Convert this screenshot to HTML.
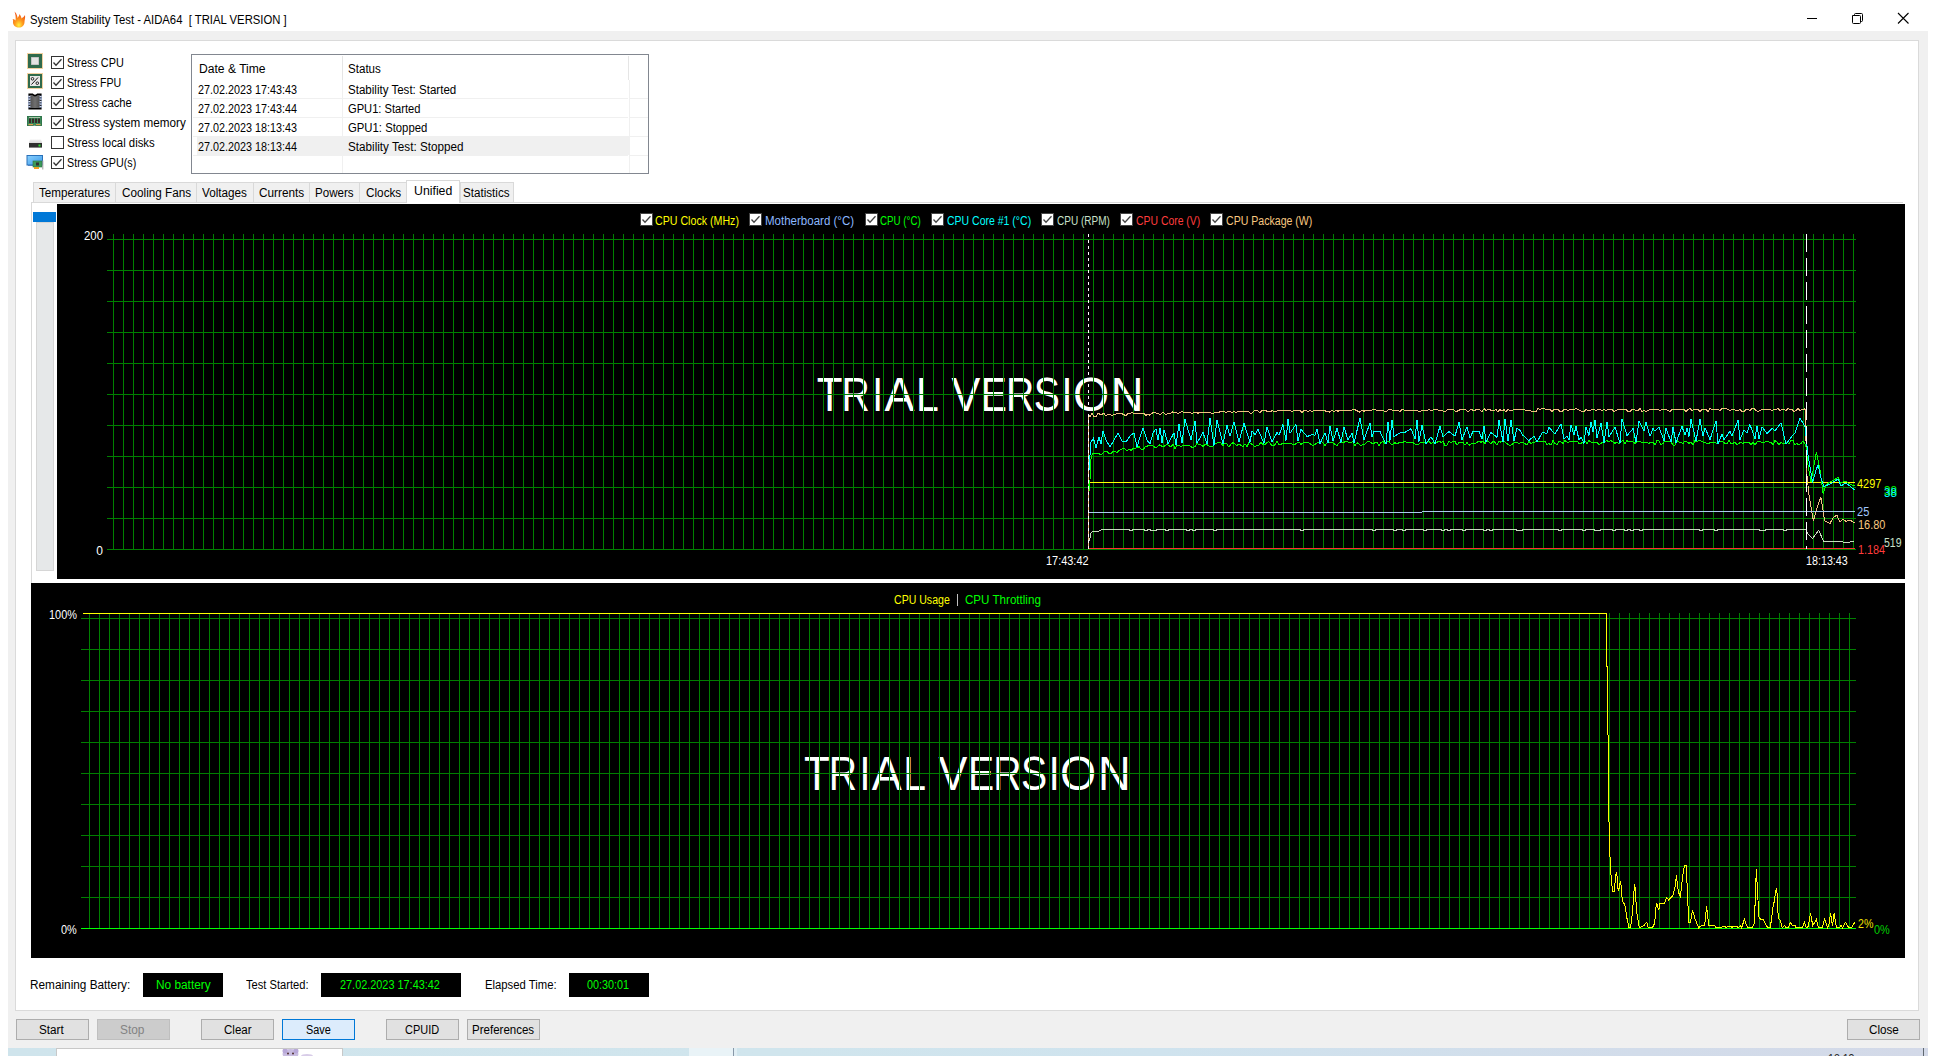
<!DOCTYPE html>
<html><head><meta charset="utf-8"><title>System Stability Test - AIDA64</title>
<style>
html,body{margin:0;padding:0;}
body{width:1936px;height:1056px;position:relative;overflow:hidden;background:#fff;font-family:"Liberation Sans", sans-serif;}
.r{position:absolute;box-sizing:content-box;}
.t{position:absolute;white-space:pre;line-height:1;font-family:"Liberation Sans", sans-serif;}
</style></head><body>
<div class="r" style="left:8px;top:31px;width:1920px;height:1017px;background:#f0f0f0;"></div>
<div class="r" style="left:15px;top:40px;width:1904px;height:971px;background:#fff;box-shadow:inset 0 0 0 1px #dadada;"></div>
<svg class="r" style="left:11px;top:11px" width="15" height="17" viewBox="0 0 15 17">
<defs><radialGradient id="fl" cx="0.5" cy="0.85" r="0.75"><stop offset="0" stop-color="#fff040"/><stop offset="0.4" stop-color="#ffa020"/><stop offset="1" stop-color="#f05010"/></radialGradient></defs>
<path d="M3.5 0.5 C6 3 6.5 5.5 6.5 7 C7.5 5.5 8.5 4.5 8.5 3 C10 5 10.5 6.5 10.5 7.5 C11.5 6.5 13 6 14 4 C14.5 7 13.5 9 13.5 11 C13.5 14.5 11 16.5 8 16.5 C5 16.5 2 14.5 2 11.5 C2 10 2.5 9 1.5 8 C3 8 4 9 4.5 9.5 C5 6.5 4.5 3 3.5 0.5 Z" fill="url(#fl)"/></svg>
<div class="t" style="left:30.28px;top:13.84px;font-size:12px;color:#000;transform:scaleX(0.9419);transform-origin:0 0;">System Stability Test - AIDA64&nbsp; [ TRIAL VERSION ]</div>
<div class="r" style="left:1807px;top:18px;width:10px;height:1px;background:#000;"></div>
<svg class="r" style="left:1852px;top:13px" width="11" height="11" viewBox="0 0 11 11"><path d="M0.5 2.5 H7.5 Q8.5 2.5 8.5 3.5 V9.5 Q8.5 10.5 7.5 10.5 H1.5 Q0.5 10.5 0.5 9.5 Z M2.5 2.5 V1.5 Q2.5 0.5 3.5 0.5 H9.5 Q10.5 0.5 10.5 1.5 V7.5 Q10.5 8.5 9.5 8.5 H8.5" fill="none" stroke="#000" stroke-width="1"/></svg>
<svg class="r" style="left:1897px;top:12px" width="12" height="12" viewBox="0 0 12 12"><path d="M1 1 L11.5 11.5 M11.5 1 L1 11.5" stroke="#000" stroke-width="1.1"/></svg>
<svg class="r" style="left:27px;top:53px" width="16" height="16" viewBox="0 0 16 16"><rect x="0.5" y="0.5" width="15" height="15" fill="none" stroke="#e0a040" stroke-width="1" stroke-dasharray="1 1"/><rect x="1" y="1" width="14" height="14" fill="#2f6a4c"/><rect x="4" y="4" width="8" height="8" fill="#e4e4e4"/><rect x="4.3" y="4.3" width="7.4" height="7.4" fill="none" stroke="#b0b0b0" stroke-width="0.6"/></svg>
<svg class="r" style="left:27px;top:73px" width="16" height="16" viewBox="0 0 16 16"><rect x="0.5" y="0.5" width="15" height="15" fill="none" stroke="#e0a040" stroke-width="1" stroke-dasharray="1 1"/><rect x="1" y="1" width="14" height="14" fill="#2f6a4c"/><rect x="3" y="3" width="10" height="10" fill="#e8e8e8"/><path d="M4.5 11.5 L11 4.5" stroke="#111" stroke-width="1"/><circle cx="5.5" cy="5.8" r="1.3" fill="none" stroke="#111" stroke-width="0.9"/><circle cx="10.3" cy="10.2" r="1.3" fill="none" stroke="#111" stroke-width="0.9"/></svg>
<svg class="r" style="left:28px;top:93px" width="14" height="17" viewBox="0 0 14 17"><defs><linearGradient id="chg" x1="0" y1="0" x2="1" y2="0"><stop offset="0" stop-color="#4a4a4a"/><stop offset="0.5" stop-color="#707070"/><stop offset="1" stop-color="#4a4a4a"/></linearGradient></defs><path d="M1.2 1.2 H4.5 Q7 4 9.5 1.2 H12.8 V15.8 H1.2 Z" fill="url(#chg)" stroke="#000" stroke-width="1.6"/><g fill="#fff" stroke="#8aa0d0" stroke-width="0.5"><rect x="0.2" y="3" width="2" height="1.2"/><rect x="0.2" y="5.5" width="2" height="1.2"/><rect x="0.2" y="8" width="2" height="1.2"/><rect x="0.2" y="10.5" width="2" height="1.2"/><rect x="0.2" y="13" width="2" height="1.2"/><rect x="11.8" y="3" width="2" height="1.2"/><rect x="11.8" y="5.5" width="2" height="1.2"/><rect x="11.8" y="8" width="2" height="1.2"/><rect x="11.8" y="10.5" width="2" height="1.2"/><rect x="11.8" y="13" width="2" height="1.2"/></g></svg>
<svg class="r" style="left:27px;top:116px" width="15" height="10" viewBox="0 0 15 10"><path d="M0 0 H15 V10 H8.5 V9 H6.5 V10 H0 Z" fill="#3c8a5a"/><rect x="0.5" y="0.5" width="14" height="9" fill="none" stroke="#2a6a44" stroke-width="0.6"/><rect x="2" y="2.5" width="2" height="4.5" fill="#3a2a2a"/><rect x="5" y="2.5" width="2" height="4.5" fill="#3a2a2a"/><rect x="8" y="2.5" width="2" height="4.5" fill="#3a2a2a"/><rect x="11" y="2.5" width="2" height="4.5" fill="#3a2a2a"/><rect x="2" y="1" width="11" height="1" fill="#a8c8a8"/><rect x="1.5" y="8" width="4.5" height="1.2" fill="#e0a050"/><rect x="9" y="8" width="4.5" height="1.2" fill="#e0a050"/></svg>
<svg class="r" style="left:28px;top:139px" width="15" height="9" viewBox="0 0 15 9"><defs><linearGradient id="dkg" x1="0" y1="0" x2="0" y2="1"><stop offset="0" stop-color="#f0f0f0"/><stop offset="1" stop-color="#b8b8b8"/></linearGradient></defs><path d="M2 0.5 H13 L14 3.5 V8.5 H1 V3.5 Z" fill="url(#dkg)"/><rect x="1" y="4" width="13" height="4.5" fill="#2e2e2e"/><rect x="10.5" y="5.5" width="2" height="2" fill="#30e030"/></svg>
<svg class="r" style="left:26px;top:155px" width="18" height="15" viewBox="0 0 18 15"><defs><linearGradient id="mng" x1="0" y1="0" x2="1" y2="1"><stop offset="0" stop-color="#8ad0ff"/><stop offset="1" stop-color="#3a9ae8"/></linearGradient></defs><rect x="1" y="0.5" width="15.5" height="9.5" fill="url(#mng)" stroke="#2a70b8" stroke-width="1"/><rect x="2" y="10" width="6" height="1" fill="#5080c0"/><rect x="7" y="6" width="9" height="6" fill="#3c9a5a" stroke="#2a7040" stroke-width="0.6"/><rect x="10" y="7.5" width="3" height="3" fill="#333"/><rect x="8" y="12" width="5" height="2" fill="#f0a020"/><rect x="16.3" y="5.5" width="1" height="9" fill="#a0a0a0"/></svg>
<div class="r" style="left:51px;top:56px;width:11px;height:11px;border:1px solid #333;background:#fff"></div>
<svg class="r" style="left:52px;top:57px" width="11" height="11" viewBox="0 0 11 11"><path d="M1.5 5.5 L4 8.2 L9.5 2.2" fill="none" stroke="#333" stroke-width="1.3"/></svg>
<div class="t" style="left:66.68px;top:56.84px;font-size:12px;color:#000;transform:scaleX(0.9057);transform-origin:0 0;">Stress CPU</div>
<div class="r" style="left:51px;top:76px;width:11px;height:11px;border:1px solid #333;background:#fff"></div>
<svg class="r" style="left:52px;top:77px" width="11" height="11" viewBox="0 0 11 11"><path d="M1.5 5.5 L4 8.2 L9.5 2.2" fill="none" stroke="#333" stroke-width="1.3"/></svg>
<div class="t" style="left:66.68px;top:76.84px;font-size:12px;color:#000;transform:scaleX(0.8844);transform-origin:0 0;">Stress FPU</div>
<div class="r" style="left:51px;top:96px;width:11px;height:11px;border:1px solid #333;background:#fff"></div>
<svg class="r" style="left:52px;top:97px" width="11" height="11" viewBox="0 0 11 11"><path d="M1.5 5.5 L4 8.2 L9.5 2.2" fill="none" stroke="#333" stroke-width="1.3"/></svg>
<div class="t" style="left:66.68px;top:96.84px;font-size:12px;color:#000;transform:scaleX(0.9327);transform-origin:0 0;">Stress cache</div>
<div class="r" style="left:51px;top:116px;width:11px;height:11px;border:1px solid #333;background:#fff"></div>
<svg class="r" style="left:52px;top:117px" width="11" height="11" viewBox="0 0 11 11"><path d="M1.5 5.5 L4 8.2 L9.5 2.2" fill="none" stroke="#333" stroke-width="1.3"/></svg>
<div class="t" style="left:66.68px;top:116.84px;font-size:12px;color:#000;transform:scaleX(0.9732);transform-origin:0 0;">Stress system memory</div>
<div class="r" style="left:51px;top:136px;width:11px;height:11px;border:1px solid #333;background:#fff"></div>
<div class="t" style="left:66.68px;top:136.84px;font-size:12px;color:#000;transform:scaleX(0.9463);transform-origin:0 0;">Stress local disks</div>
<div class="r" style="left:51px;top:156px;width:11px;height:11px;border:1px solid #333;background:#fff"></div>
<svg class="r" style="left:52px;top:157px" width="11" height="11" viewBox="0 0 11 11"><path d="M1.5 5.5 L4 8.2 L9.5 2.2" fill="none" stroke="#333" stroke-width="1.3"/></svg>
<div class="t" style="left:66.68px;top:156.84px;font-size:12px;color:#000;transform:scaleX(0.8956);transform-origin:0 0;">Stress GPU(s)</div>
<div class="r" style="left:191px;top:54px;width:458px;height:120px;background:#fff;box-shadow:inset 0 0 0 1px #828790;"></div>
<div class="r" style="left:342px;top:56px;width:1px;height:24px;background:#e5e5e5;"></div>
<div class="r" style="left:628px;top:56px;width:1px;height:24px;background:#e5e5e5;"></div>
<div class="t" style="left:198.78px;top:62.84px;font-size:12px;color:#000;transform:scaleX(1.0084);transform-origin:0 0;">Date &amp; Time</div>
<div class="t" style="left:348.28px;top:62.84px;font-size:12px;color:#000;transform:scaleX(0.9651);transform-origin:0 0;">Status</div>
<div class="r" style="left:197px;top:136px;width:432px;height:19px;background:#f0f0f0;"></div>
<div class="r" style="left:193px;top:98px;width:435px;height:1px;background:#f0f0f0;"></div>
<div class="r" style="left:630px;top:98px;width:18px;height:1px;background:#f0f0f0;"></div>
<div class="r" style="left:193px;top:117px;width:435px;height:1px;background:#f0f0f0;"></div>
<div class="r" style="left:630px;top:117px;width:18px;height:1px;background:#f0f0f0;"></div>
<div class="r" style="left:193px;top:136px;width:435px;height:1px;background:#f0f0f0;"></div>
<div class="r" style="left:630px;top:136px;width:18px;height:1px;background:#f0f0f0;"></div>
<div class="r" style="left:193px;top:155px;width:435px;height:1px;background:#f0f0f0;"></div>
<div class="r" style="left:630px;top:155px;width:18px;height:1px;background:#f0f0f0;"></div>
<div class="r" style="left:342px;top:80px;width:1px;height:93px;background:#f0f0f0;"></div>
<div class="r" style="left:629px;top:80px;width:1px;height:93px;background:#f0f0f0;"></div>
<div class="t" style="left:198.28px;top:83.84px;font-size:12px;color:#000;transform:scaleX(0.8988);transform-origin:0 0;">27.02.2023 17:43:43</div>
<div class="t" style="left:348.28px;top:83.84px;font-size:12px;color:#000;transform:scaleX(0.9621);transform-origin:0 0;">Stability Test: Started</div>
<div class="t" style="left:198.28px;top:102.84px;font-size:12px;color:#000;transform:scaleX(0.8988);transform-origin:0 0;">27.02.2023 17:43:44</div>
<div class="t" style="left:348.28px;top:102.84px;font-size:12px;color:#000;transform:scaleX(0.9290);transform-origin:0 0;">GPU1: Started</div>
<div class="t" style="left:198.28px;top:121.84px;font-size:12px;color:#000;transform:scaleX(0.8988);transform-origin:0 0;">27.02.2023 18:13:43</div>
<div class="t" style="left:348.28px;top:121.84px;font-size:12px;color:#000;transform:scaleX(0.9436);transform-origin:0 0;">GPU1: Stopped</div>
<div class="t" style="left:198.28px;top:140.84px;font-size:12px;color:#000;transform:scaleX(0.8988);transform-origin:0 0;">27.02.2023 18:13:44</div>
<div class="t" style="left:348.28px;top:140.84px;font-size:12px;color:#000;transform:scaleX(0.9740);transform-origin:0 0;">Stability Test: Stopped</div>
<div class="r" style="left:33px;top:182px;width:83px;height:21px;background:#f0f0f0;box-shadow:inset 0 0 0 1px #d9d9d9;"></div>
<div class="t" style="left:38.88px;top:186.84px;font-size:12px;color:#000;transform:scaleX(0.9683);transform-origin:0 0;">Temperatures</div>
<div class="r" style="left:115px;top:182px;width:82px;height:21px;background:#f0f0f0;box-shadow:inset 0 0 0 1px #d9d9d9;"></div>
<div class="t" style="left:121.78px;top:186.84px;font-size:12px;color:#000;transform:scaleX(0.9779);transform-origin:0 0;">Cooling Fans</div>
<div class="r" style="left:196px;top:182px;width:58px;height:21px;background:#f0f0f0;box-shadow:inset 0 0 0 1px #d9d9d9;"></div>
<div class="t" style="left:202.28px;top:186.84px;font-size:12px;color:#000;transform:scaleX(0.9763);transform-origin:0 0;">Voltages</div>
<div class="r" style="left:253px;top:182px;width:57px;height:21px;background:#f0f0f0;box-shadow:inset 0 0 0 1px #d9d9d9;"></div>
<div class="t" style="left:258.78px;top:186.84px;font-size:12px;color:#000;transform:scaleX(0.9814);transform-origin:0 0;">Currents</div>
<div class="r" style="left:309px;top:182px;width:51px;height:21px;background:#f0f0f0;box-shadow:inset 0 0 0 1px #d9d9d9;"></div>
<div class="t" style="left:315.48px;top:186.84px;font-size:12px;color:#000;transform:scaleX(0.9631);transform-origin:0 0;">Powers</div>
<div class="r" style="left:359px;top:182px;width:48px;height:21px;background:#f0f0f0;box-shadow:inset 0 0 0 1px #d9d9d9;"></div>
<div class="t" style="left:365.88px;top:186.84px;font-size:12px;color:#000;transform:scaleX(0.9789);transform-origin:0 0;">Clocks</div>
<div class="r" style="left:406px;top:180px;width:54px;height:24px;background:#fff;box-shadow:inset 1px 1px 0 0 #d9d9d9, inset -1px 0 0 0 #d9d9d9;"></div>
<div class="t" style="left:413.58px;top:184.84px;font-size:12px;color:#000;transform:scaleX(1.0254);transform-origin:0 0;">Unified</div>
<div class="r" style="left:460px;top:182px;width:54px;height:21px;background:#f0f0f0;box-shadow:inset 0 0 0 1px #d9d9d9;"></div>
<div class="t" style="left:463.48px;top:186.84px;font-size:12px;color:#000;transform:scaleX(0.9694);transform-origin:0 0;">Statistics</div>
<div class="r" style="left:31px;top:202px;width:375px;height:1px;background:#d9d9d9;"></div>
<div class="r" style="left:460px;top:202px;width:1443px;height:1px;background:#d9d9d9;"></div>
<div class="r" style="left:31px;top:202px;width:1px;height:381px;background:#d9d9d9;"></div>
<div class="r" style="left:406px;top:203px;width:54px;height:1px;background:#fff;"></div>
<div class="r" style="left:33px;top:212px;width:23px;height:10px;background:#0078d7;"></div>
<div class="r" style="left:36px;top:222px;width:18px;height:349px;background:#e6e8e9;box-shadow:inset 0 0 0 1px #d6d6d6;"></div>
<div class="r" style="left:57px;top:204px;width:1848px;height:375px;background:#000;"></div>
<div class="r" style="left:31px;top:583px;width:1874px;height:375px;background:#000;"></div>
<svg class="r" style="left:0;top:0" width="1936" height="1056" viewBox="0 0 1936 1056"><text transform="translate(816.84,410.6) scale(0.861,1)" x="0" y="0" font-family="Liberation Sans" font-size="49" fill="#fff">T</text><text transform="translate(841.55,410.6) scale(0.800,1)" x="0" y="0" font-family="Liberation Sans" font-size="49" fill="#fff">R</text><text transform="translate(872.20,410.6) scale(0.800,1)" x="0" y="0" font-family="Liberation Sans" font-size="49" fill="#fff">I</text><text transform="translate(884.60,410.6) scale(0.918,1)" x="0" y="0" font-family="Liberation Sans" font-size="49" fill="#fff">A</text><text transform="translate(915.95,410.6) scale(0.836,1)" x="0" y="0" font-family="Liberation Sans" font-size="49" fill="#fff">L</text><text transform="translate(951.40,410.6) scale(0.882,1)" x="0" y="0" font-family="Liberation Sans" font-size="49" fill="#fff">V</text><text transform="translate(980.75,410.6) scale(0.800,1)" x="0" y="0" font-family="Liberation Sans" font-size="49" fill="#fff">E</text><text transform="translate(1006.05,410.6) scale(0.800,1)" x="0" y="0" font-family="Liberation Sans" font-size="49" fill="#fff">R</text><text transform="translate(1033.75,410.6) scale(0.800,1)" x="0" y="0" font-family="Liberation Sans" font-size="49" fill="#fff">S</text><text transform="translate(1061.45,410.6) scale(0.800,1)" x="0" y="0" font-family="Liberation Sans" font-size="49" fill="#fff">I</text><text transform="translate(1072.90,410.6) scale(0.950,1)" x="0" y="0" font-family="Liberation Sans" font-size="49" fill="#fff">O</text><text transform="translate(1110.80,410.6) scale(0.925,1)" x="0" y="0" font-family="Liberation Sans" font-size="49" fill="#fff">N</text><text transform="translate(804.04,789.8) scale(0.861,1)" x="0" y="0" font-family="Liberation Sans" font-size="49" fill="#fff">T</text><text transform="translate(828.75,789.8) scale(0.800,1)" x="0" y="0" font-family="Liberation Sans" font-size="49" fill="#fff">R</text><text transform="translate(859.40,789.8) scale(0.800,1)" x="0" y="0" font-family="Liberation Sans" font-size="49" fill="#fff">I</text><text transform="translate(871.80,789.8) scale(0.918,1)" x="0" y="0" font-family="Liberation Sans" font-size="49" fill="#fff">A</text><text transform="translate(903.15,789.8) scale(0.836,1)" x="0" y="0" font-family="Liberation Sans" font-size="49" fill="#fff">L</text><text transform="translate(938.60,789.8) scale(0.882,1)" x="0" y="0" font-family="Liberation Sans" font-size="49" fill="#fff">V</text><text transform="translate(967.95,789.8) scale(0.800,1)" x="0" y="0" font-family="Liberation Sans" font-size="49" fill="#fff">E</text><text transform="translate(993.25,789.8) scale(0.800,1)" x="0" y="0" font-family="Liberation Sans" font-size="49" fill="#fff">R</text><text transform="translate(1020.95,789.8) scale(0.800,1)" x="0" y="0" font-family="Liberation Sans" font-size="49" fill="#fff">S</text><text transform="translate(1048.65,789.8) scale(0.800,1)" x="0" y="0" font-family="Liberation Sans" font-size="49" fill="#fff">I</text><text transform="translate(1060.10,789.8) scale(0.950,1)" x="0" y="0" font-family="Liberation Sans" font-size="49" fill="#fff">O</text><text transform="translate(1098.00,789.8) scale(0.925,1)" x="0" y="0" font-family="Liberation Sans" font-size="49" fill="#fff">N</text><path d="M107 239.5H1856M107 270.5H1856M107 301.5H1856M107 332.5H1856M107 363.5H1856M107 394.5H1856M107 425.5H1856M107 456.5H1856M107 487.5H1856M107 518.5H1856M107 549.5H1856M113.5 234V550M123.5 234V550M133.5 234V550M143.5 234V550M153.5 234V550M163.5 234V550M173.5 234V550M183.5 234V550M193.5 234V550M203.5 234V550M213.5 234V550M223.5 234V550M233.5 234V550M243.5 234V550M253.5 234V550M263.5 234V550M273.5 234V550M283.5 234V550M293.5 234V550M303.5 234V550M313.5 234V550M323.5 234V550M333.5 234V550M343.5 234V550M353.5 234V550M363.5 234V550M373.5 234V550M383.5 234V550M393.5 234V550M403.5 234V550M413.5 234V550M423.5 234V550M433.5 234V550M443.5 234V550M453.5 234V550M463.5 234V550M473.5 234V550M483.5 234V550M493.5 234V550M503.5 234V550M513.5 234V550M523.5 234V550M533.5 234V550M543.5 234V550M553.5 234V550M563.5 234V550M573.5 234V550M583.5 234V550M593.5 234V550M603.5 234V550M613.5 234V550M623.5 234V550M633.5 234V550M643.5 234V550M653.5 234V550M663.5 234V550M673.5 234V550M683.5 234V550M693.5 234V550M703.5 234V550M713.5 234V550M723.5 234V550M733.5 234V550M743.5 234V550M753.5 234V550M763.5 234V550M773.5 234V550M783.5 234V550M793.5 234V550M803.5 234V550M813.5 234V550M823.5 234V550M833.5 234V550M843.5 234V550M853.5 234V550M863.5 234V550M873.5 234V550M883.5 234V550M893.5 234V550M903.5 234V550M913.5 234V550M923.5 234V550M933.5 234V550M943.5 234V550M953.5 234V550M963.5 234V550M973.5 234V550M983.5 234V550M993.5 234V550M1003.5 234V550M1013.5 234V550M1023.5 234V550M1033.5 234V550M1043.5 234V550M1053.5 234V550M1063.5 234V550M1073.5 234V550M1083.5 234V550M1093.5 234V550M1103.5 234V550M1113.5 234V550M1123.5 234V550M1133.5 234V550M1143.5 234V550M1153.5 234V550M1163.5 234V550M1173.5 234V550M1183.5 234V550M1193.5 234V550M1203.5 234V550M1213.5 234V550M1223.5 234V550M1233.5 234V550M1243.5 234V550M1253.5 234V550M1263.5 234V550M1273.5 234V550M1283.5 234V550M1293.5 234V550M1303.5 234V550M1313.5 234V550M1323.5 234V550M1333.5 234V550M1343.5 234V550M1353.5 234V550M1363.5 234V550M1373.5 234V550M1383.5 234V550M1393.5 234V550M1403.5 234V550M1413.5 234V550M1423.5 234V550M1433.5 234V550M1443.5 234V550M1453.5 234V550M1463.5 234V550M1473.5 234V550M1483.5 234V550M1493.5 234V550M1503.5 234V550M1513.5 234V550M1523.5 234V550M1533.5 234V550M1543.5 234V550M1553.5 234V550M1563.5 234V550M1573.5 234V550M1583.5 234V550M1593.5 234V550M1603.5 234V550M1613.5 234V550M1623.5 234V550M1633.5 234V550M1643.5 234V550M1653.5 234V550M1663.5 234V550M1673.5 234V550M1683.5 234V550M1693.5 234V550M1703.5 234V550M1713.5 234V550M1723.5 234V550M1733.5 234V550M1743.5 234V550M1753.5 234V550M1763.5 234V550M1773.5 234V550M1783.5 234V550M1793.5 234V550M1803.5 234V550M1813.5 234V550M1823.5 234V550M1833.5 234V550M1843.5 234V550M1853.5 234V550" stroke="#008000" stroke-width="1" fill="none" shape-rendering="crispEdges"/><path d="M81 618.5H1856M81 649.5H1856M81 680.5H1856M81 711.5H1856M81 742.5H1856M81 773.5H1856M81 804.5H1856M81 835.5H1856M81 866.5H1856M81 897.5H1856M89.5 613V929M99.5 613V929M109.5 613V929M119.5 613V929M129.5 613V929M139.5 613V929M149.5 613V929M159.5 613V929M169.5 613V929M179.5 613V929M189.5 613V929M199.5 613V929M209.5 613V929M219.5 613V929M229.5 613V929M239.5 613V929M249.5 613V929M259.5 613V929M269.5 613V929M279.5 613V929M289.5 613V929M299.5 613V929M309.5 613V929M319.5 613V929M329.5 613V929M339.5 613V929M349.5 613V929M359.5 613V929M369.5 613V929M379.5 613V929M389.5 613V929M399.5 613V929M409.5 613V929M419.5 613V929M429.5 613V929M439.5 613V929M449.5 613V929M459.5 613V929M469.5 613V929M479.5 613V929M489.5 613V929M499.5 613V929M509.5 613V929M519.5 613V929M529.5 613V929M539.5 613V929M549.5 613V929M559.5 613V929M569.5 613V929M579.5 613V929M589.5 613V929M599.5 613V929M609.5 613V929M619.5 613V929M629.5 613V929M639.5 613V929M649.5 613V929M659.5 613V929M669.5 613V929M679.5 613V929M689.5 613V929M699.5 613V929M709.5 613V929M719.5 613V929M729.5 613V929M739.5 613V929M749.5 613V929M759.5 613V929M769.5 613V929M779.5 613V929M789.5 613V929M799.5 613V929M809.5 613V929M819.5 613V929M829.5 613V929M839.5 613V929M849.5 613V929M859.5 613V929M869.5 613V929M879.5 613V929M889.5 613V929M899.5 613V929M909.5 613V929M919.5 613V929M929.5 613V929M939.5 613V929M949.5 613V929M959.5 613V929M969.5 613V929M979.5 613V929M989.5 613V929M999.5 613V929M1009.5 613V929M1019.5 613V929M1029.5 613V929M1039.5 613V929M1049.5 613V929M1059.5 613V929M1069.5 613V929M1079.5 613V929M1089.5 613V929M1099.5 613V929M1109.5 613V929M1119.5 613V929M1129.5 613V929M1139.5 613V929M1149.5 613V929M1159.5 613V929M1169.5 613V929M1179.5 613V929M1189.5 613V929M1199.5 613V929M1209.5 613V929M1219.5 613V929M1229.5 613V929M1239.5 613V929M1249.5 613V929M1259.5 613V929M1269.5 613V929M1279.5 613V929M1289.5 613V929M1299.5 613V929M1309.5 613V929M1319.5 613V929M1329.5 613V929M1339.5 613V929M1349.5 613V929M1359.5 613V929M1369.5 613V929M1379.5 613V929M1389.5 613V929M1399.5 613V929M1409.5 613V929M1419.5 613V929M1429.5 613V929M1439.5 613V929M1449.5 613V929M1459.5 613V929M1469.5 613V929M1479.5 613V929M1489.5 613V929M1499.5 613V929M1509.5 613V929M1519.5 613V929M1529.5 613V929M1539.5 613V929M1549.5 613V929M1559.5 613V929M1569.5 613V929M1579.5 613V929M1589.5 613V929M1599.5 613V929M1609.5 613V929M1619.5 613V929M1629.5 613V929M1639.5 613V929M1649.5 613V929M1659.5 613V929M1669.5 613V929M1679.5 613V929M1689.5 613V929M1699.5 613V929M1709.5 613V929M1719.5 613V929M1729.5 613V929M1739.5 613V929M1749.5 613V929M1759.5 613V929M1769.5 613V929M1779.5 613V929M1789.5 613V929M1799.5 613V929M1809.5 613V929M1819.5 613V929M1829.5 613V929M1839.5 613V929M1849.5 613V929" stroke="#008000" stroke-width="1" fill="none" shape-rendering="crispEdges"/><path d="M81 928.5H1856" stroke="#00ff00" stroke-width="1" shape-rendering="crispEdges"/><polyline points="1088.5,549.0 1088.5,414.5 1090.0,416.5 1092.0,413.5 1094.0,416.4 1096.0,416.4 1098.0,413.3 1100.0,414.3 1102.0,414.2 1104.0,413.2 1106.0,416.2 1108.0,414.1 1110.0,414.1 1112.0,416.0 1114.0,414.0 1116.0,414.0 1118.0,413.9 1120.0,412.9 1122.0,413.8 1124.0,414.8 1126.0,415.7 1128.0,413.7 1130.0,413.7 1132.0,412.6 1134.0,413.6 1136.0,413.5 1138.0,413.5 1140.0,413.4 1142.0,413.4 1144.0,413.4 1146.0,415.3 1148.0,414.3 1150.0,415.2 1152.0,413.2 1154.0,412.2 1156.0,413.1 1158.0,413.1 1160.0,415.0 1162.0,413.0 1164.0,412.9 1166.0,414.9 1168.0,412.9 1170.0,413.8 1172.0,411.8 1174.0,412.7 1176.0,412.7 1178.0,413.6 1180.0,412.6 1182.0,411.6 1184.0,412.5 1186.0,412.5 1188.0,412.4 1190.0,412.4 1192.0,413.4 1194.0,412.3 1196.0,412.3 1198.0,413.2 1200.0,412.2 1202.0,412.1 1204.0,412.1 1206.0,412.1 1208.0,412.0 1210.0,412.0 1212.0,413.9 1214.0,412.9 1216.0,412.8 1218.0,412.8 1220.0,411.8 1222.0,411.7 1224.0,411.7 1226.0,412.6 1228.0,411.6 1230.0,411.6 1232.0,412.5 1234.0,411.5 1236.0,412.4 1238.0,411.4 1240.0,411.3 1242.0,411.3 1244.0,411.3 1246.0,411.2 1248.0,411.2 1250.0,413.1 1252.0,413.1 1254.0,411.0 1256.0,410.0 1258.0,411.0 1260.0,412.9 1262.0,409.9 1264.0,410.8 1266.0,410.8 1268.0,411.8 1270.0,411.7 1272.0,410.7 1274.0,411.6 1276.0,411.6 1278.0,410.5 1280.0,410.5 1282.0,410.5 1284.0,410.5 1286.0,410.5 1288.0,410.5 1290.0,410.5 1292.0,411.5 1294.0,410.4 1296.0,410.4 1298.0,410.4 1300.0,410.4 1302.0,412.4 1304.0,410.4 1306.0,410.4 1308.0,411.4 1310.0,410.4 1312.0,411.4 1314.0,410.4 1316.0,410.4 1318.0,410.4 1320.0,410.4 1322.0,410.3 1324.0,410.3 1326.0,411.3 1328.0,411.3 1330.0,412.3 1332.0,410.3 1334.0,412.3 1336.0,410.3 1338.0,411.3 1340.0,410.3 1342.0,410.3 1344.0,410.3 1346.0,410.3 1348.0,410.2 1350.0,410.2 1352.0,410.2 1354.0,409.2 1356.0,410.2 1358.0,411.2 1360.0,412.2 1362.0,410.2 1364.0,411.2 1366.0,410.2 1368.0,410.2 1370.0,410.2 1372.0,410.2 1374.0,409.2 1376.0,410.1 1378.0,410.1 1380.0,411.1 1382.0,410.1 1384.0,411.1 1386.0,412.1 1388.0,410.1 1390.0,409.1 1392.0,410.1 1394.0,410.1 1396.0,410.1 1398.0,410.1 1400.0,412.1 1402.0,409.0 1404.0,410.0 1406.0,410.0 1408.0,410.0 1410.0,410.0 1412.0,410.0 1414.0,410.0 1416.0,410.0 1418.0,411.0 1420.0,412.0 1422.0,410.0 1424.0,410.0 1426.0,410.0 1428.0,410.0 1430.0,409.9 1432.0,410.9 1434.0,408.9 1436.0,409.9 1438.0,409.9 1440.0,410.9 1442.0,409.9 1444.0,411.9 1446.0,410.9 1448.0,408.9 1450.0,409.9 1452.0,409.9 1454.0,409.9 1456.0,411.8 1458.0,410.8 1460.0,409.8 1462.0,409.8 1464.0,409.8 1466.0,409.8 1468.0,411.8 1470.0,409.8 1472.0,409.8 1474.0,410.8 1476.0,409.8 1478.0,409.8 1480.0,409.8 1482.0,411.8 1484.0,408.7 1486.0,410.7 1488.0,409.7 1490.0,409.7 1492.0,410.7 1494.0,410.7 1496.0,409.7 1498.0,411.7 1500.0,409.7 1502.0,410.7 1504.0,409.7 1506.0,411.7 1508.0,409.7 1510.0,410.6 1512.0,410.6 1514.0,409.6 1516.0,409.6 1518.0,409.6 1520.0,409.6 1522.0,409.6 1524.0,409.6 1526.0,410.6 1528.0,410.6 1530.0,410.6 1532.0,411.6 1534.0,411.6 1536.0,411.6 1538.0,408.5 1540.0,409.5 1542.0,408.5 1544.0,408.5 1546.0,409.5 1548.0,409.5 1550.0,409.5 1552.0,411.5 1554.0,409.5 1556.0,409.5 1558.0,409.5 1560.0,411.5 1562.0,411.5 1564.0,409.5 1566.0,409.5 1568.0,410.5 1570.0,409.5 1572.0,409.5 1574.0,409.5 1576.0,408.5 1578.0,409.5 1580.0,410.5 1582.0,411.5 1584.0,411.5 1586.0,409.5 1588.0,410.5 1590.0,410.5 1592.0,409.5 1594.0,409.5 1596.0,410.5 1598.0,409.5 1600.0,409.5 1602.0,410.5 1604.0,409.5 1606.0,410.5 1608.0,409.5 1610.0,409.5 1612.0,409.5 1614.0,411.5 1616.0,410.5 1618.0,409.5 1620.0,409.5 1622.0,409.5 1624.0,409.5 1626.0,409.5 1628.0,411.5 1630.0,411.5 1632.0,409.5 1634.0,409.5 1636.0,410.5 1638.0,410.5 1640.0,408.5 1642.0,411.5 1644.0,410.5 1646.0,411.5 1648.0,410.5 1650.0,409.5 1652.0,409.5 1654.0,409.5 1656.0,409.5 1658.0,409.5 1660.0,410.5 1662.0,409.5 1664.0,409.5 1666.0,409.5 1668.0,410.5 1670.0,411.5 1672.0,409.5 1674.0,409.5 1676.0,409.5 1678.0,409.5 1680.0,409.5 1682.0,409.5 1684.0,409.5 1686.0,411.5 1688.0,409.5 1690.0,408.5 1692.0,410.5 1694.0,409.5 1696.0,409.5 1698.0,409.5 1700.0,411.5 1702.0,409.5 1704.0,409.5 1706.0,409.5 1708.0,411.5 1710.0,408.5 1712.0,409.5 1714.0,409.5 1716.0,409.5 1718.0,409.5 1720.0,410.5 1722.0,408.5 1724.0,408.5 1726.0,408.5 1728.0,409.5 1730.0,410.5 1732.0,409.5 1734.0,409.5 1736.0,410.5 1738.0,410.5 1740.0,409.5 1742.0,411.5 1744.0,411.5 1746.0,409.5 1748.0,409.5 1750.0,410.5 1752.0,408.5 1754.0,408.5 1756.0,410.5 1758.0,411.5 1760.0,410.5 1762.0,409.5 1764.0,409.5 1766.0,409.5 1768.0,409.5 1770.0,409.5 1772.0,410.5 1774.0,409.5 1776.0,409.5 1778.0,408.5 1780.0,410.5 1782.0,409.5 1784.0,409.5 1786.0,410.5 1788.0,408.5 1790.0,409.5 1792.0,409.5 1794.0,411.5 1796.0,410.5 1798.0,408.5 1800.0,410.5 1802.0,409.5 1804.5,409.0 1805.5,410.0 1806.5,471.0 1809.0,495.0 1813.3,521.0 1817.0,508.0 1820.9,497.0 1824.7,521.0 1830.0,523.5 1833.0,518.0 1836.8,515.0 1840.0,522.0 1843.0,519.0 1846.0,521.5 1850.0,520.0 1854.5,523.0" fill="none" stroke="#f0c080" stroke-width="1.0" shape-rendering="crispEdges"/><polyline points="1089.0,541.0 1090.0,538.0 1091.0,533.0 1093.0,531.0 1099.0,531.0 1101.0,530.0 1104.0,529.5 1107.0,529.5 1110.0,529.5 1113.0,529.5 1116.0,529.5 1119.0,529.5 1122.0,529.5 1125.0,529.5 1128.0,529.5 1131.0,530.5 1134.0,529.5 1137.0,529.5 1140.0,529.5 1143.0,529.5 1146.0,530.5 1149.0,529.5 1152.0,530.5 1155.0,530.5 1158.0,529.5 1161.0,529.5 1164.0,529.5 1167.0,530.5 1170.0,529.5 1173.0,529.5 1176.0,529.5 1179.0,529.5 1182.0,529.5 1185.0,529.5 1188.0,530.5 1191.0,529.5 1194.0,530.5 1197.0,529.5 1200.0,529.5 1203.0,529.5 1206.0,529.5 1209.0,529.5 1212.0,529.5 1215.0,530.5 1218.0,529.5 1221.0,529.5 1224.0,529.5 1227.0,529.5 1230.0,529.5 1233.0,529.5 1236.0,529.5 1239.0,529.5 1242.0,529.5 1245.0,529.5 1248.0,529.5 1251.0,529.5 1254.0,529.5 1257.0,529.5 1260.0,529.5 1263.0,529.5 1266.0,529.5 1269.0,529.5 1272.0,529.5 1275.0,529.5 1278.0,529.5 1281.0,529.5 1284.0,529.5 1287.0,529.5 1290.0,529.5 1293.0,529.5 1296.0,529.5 1299.0,529.5 1302.0,530.5 1305.0,529.5 1308.0,529.5 1311.0,529.5 1314.0,529.5 1317.0,529.5 1320.0,529.5 1323.0,529.5 1326.0,529.5 1329.0,529.5 1332.0,529.5 1335.0,529.5 1338.0,529.5 1341.0,529.5 1344.0,529.5 1347.0,529.5 1350.0,529.5 1353.0,529.5 1356.0,529.5 1359.0,529.5 1362.0,529.5 1365.0,529.5 1368.0,529.5 1371.0,529.5 1374.0,530.5 1377.0,529.5 1380.0,529.5 1383.0,529.5 1386.0,529.5 1389.0,529.5 1392.0,529.5 1395.0,530.5 1398.0,529.5 1401.0,529.5 1404.0,530.5 1407.0,529.5 1410.0,529.5 1413.0,529.5 1416.0,529.5 1419.0,529.5 1422.0,529.5 1425.0,530.5 1428.0,529.5 1431.0,529.5 1434.0,529.5 1437.0,529.5 1440.0,529.5 1443.0,530.5 1446.0,529.5 1449.0,530.5 1452.0,529.5 1455.0,529.5 1458.0,529.5 1461.0,529.5 1464.0,530.5 1467.0,529.5 1470.0,529.5 1473.0,529.5 1476.0,529.5 1479.0,529.5 1482.0,529.5 1485.0,530.5 1488.0,529.5 1491.0,530.5 1494.0,529.5 1497.0,529.5 1500.0,529.5 1503.0,529.5 1506.0,529.5 1509.0,529.5 1512.0,529.5 1515.0,529.5 1518.0,530.5 1521.0,530.5 1524.0,529.5 1527.0,529.5 1530.0,529.5 1533.0,529.5 1536.0,529.5 1539.0,529.5 1542.0,529.5 1545.0,529.5 1548.0,529.5 1551.0,529.5 1554.0,529.5 1557.0,529.5 1560.0,530.5 1563.0,529.5 1566.0,529.5 1569.0,529.5 1572.0,529.5 1575.0,529.5 1578.0,529.5 1581.0,529.5 1584.0,530.5 1587.0,529.5 1590.0,529.5 1593.0,529.5 1596.0,530.5 1599.0,530.5 1602.0,529.5 1605.0,529.5 1608.0,529.5 1611.0,529.5 1614.0,530.5 1617.0,529.5 1620.0,529.5 1623.0,529.5 1626.0,530.5 1629.0,529.5 1632.0,530.5 1635.0,529.5 1638.0,529.5 1641.0,530.5 1644.0,529.5 1647.0,529.5 1650.0,529.5 1653.0,529.5 1656.0,529.5 1659.0,529.5 1662.0,529.5 1665.0,529.5 1668.0,529.5 1671.0,529.5 1674.0,529.5 1677.0,529.5 1680.0,529.5 1683.0,529.5 1686.0,529.5 1689.0,529.5 1692.0,529.5 1695.0,529.5 1698.0,529.5 1701.0,530.5 1704.0,529.5 1707.0,529.5 1710.0,529.5 1713.0,529.5 1716.0,530.5 1719.0,529.5 1722.0,529.5 1725.0,529.5 1728.0,529.5 1731.0,529.5 1734.0,529.5 1737.0,529.5 1740.0,529.5 1743.0,529.5 1746.0,529.5 1749.0,529.5 1752.0,529.5 1755.0,529.5 1758.0,529.5 1761.0,530.5 1764.0,530.5 1767.0,529.5 1770.0,529.5 1773.0,529.5 1776.0,529.5 1779.0,529.5 1782.0,529.5 1785.0,530.5 1788.0,529.5 1791.0,529.5 1794.0,529.5 1797.0,529.5 1800.0,529.5 1803.0,529.5 1806.0,529.5 1808.0,534.0 1812.6,538.6 1818.6,530.3 1823.9,541.7 1840.0,541.7 1846.0,542.3 1854.5,541.7" fill="none" stroke="#c8dcc0" stroke-width="1.0" shape-rendering="crispEdges"/><path d="M1088 512.5H1422M1422 511.5H1855" stroke="#a8c8f0" stroke-width="1" shape-rendering="crispEdges"/><path d="M1089 482.5H1855" stroke="#ffff00" stroke-width="1" shape-rendering="crispEdges"/><path d="M1088 548.5H1855" stroke="#ff3030" stroke-width="1" shape-rendering="crispEdges"/><polyline points="1089.5,482.0 1088.5,487.0 1089.5,491.0 1090.0,480.0 1090.5,462.0 1091.5,457.0 1092.0,455.0 1093.0,453.1 1095.0,454.2 1097.0,452.9 1099.0,453.6 1101.0,454.9 1103.0,453.1 1105.0,451.2 1107.0,451.4 1109.0,453.6 1111.0,453.4 1113.0,451.6 1115.0,451.2 1117.0,452.4 1119.0,450.6 1121.0,449.4 1123.0,448.6 1125.0,448.8 1127.0,450.9 1129.0,449.1 1131.0,450.4 1133.0,448.6 1135.0,448.2 1137.0,447.9 1139.0,446.6 1141.0,448.9 1143.0,450.1 1145.0,446.8 1147.0,446.4 1149.0,445.1 1151.0,446.0 1153.0,445.9 1155.0,447.4 1157.0,447.3 1159.0,444.8 1161.0,445.7 1163.0,447.2 1165.0,445.7 1167.0,444.1 1169.0,445.6 1171.0,447.0 1173.0,444.0 1175.0,448.4 1177.0,445.4 1179.0,445.3 1181.0,446.8 1183.0,445.2 1185.0,445.2 1187.0,445.1 1189.0,445.1 1191.0,446.6 1193.0,448.0 1195.0,446.5 1197.0,443.4 1199.0,444.9 1201.0,444.8 1203.0,446.3 1205.0,444.7 1207.0,444.7 1209.0,446.1 1211.0,446.1 1213.0,446.0 1215.0,443.5 1217.0,443.0 1219.0,442.9 1221.0,442.9 1223.0,445.8 1225.0,442.8 1227.0,444.2 1229.0,447.2 1231.0,444.1 1233.0,442.6 1235.0,444.0 1237.0,445.5 1239.0,443.9 1241.0,445.4 1243.0,446.9 1245.0,443.8 1247.0,446.8 1249.0,442.2 1251.0,443.7 1253.0,445.1 1255.0,446.6 1257.0,445.0 1259.0,445.0 1261.0,441.9 1263.0,444.9 1265.0,444.8 1267.0,442.3 1269.0,441.8 1271.0,444.7 1273.0,446.2 1275.0,444.6 1277.0,441.6 1279.0,444.5 1281.0,444.5 1283.0,443.0 1285.0,443.0 1287.0,443.0 1289.0,443.0 1291.0,443.0 1293.0,444.5 1295.0,444.4 1297.0,442.9 1299.0,441.9 1301.0,444.4 1303.0,442.9 1305.0,441.9 1307.0,442.9 1309.0,442.9 1311.0,444.4 1313.0,445.9 1315.0,444.4 1317.0,442.9 1319.0,442.9 1321.0,441.3 1323.0,442.8 1325.0,445.8 1327.0,442.8 1329.0,442.8 1331.0,442.8 1333.0,442.8 1335.0,444.3 1337.0,445.8 1339.0,442.8 1341.0,442.8 1343.0,442.8 1345.0,441.8 1347.0,441.3 1349.0,442.7 1351.0,442.7 1353.0,441.7 1355.0,445.7 1357.0,442.7 1359.0,444.2 1361.0,445.7 1363.0,444.2 1365.0,444.2 1367.0,441.7 1369.0,441.2 1371.0,442.7 1373.0,444.2 1375.0,442.6 1377.0,442.6 1379.0,445.6 1381.0,442.6 1383.0,441.1 1385.0,444.1 1387.0,441.1 1389.0,441.6 1391.0,444.1 1393.0,444.1 1395.0,442.6 1397.0,444.1 1399.0,442.6 1401.0,442.6 1403.0,442.5 1405.0,441.0 1407.0,442.5 1409.0,442.5 1411.0,442.5 1413.0,442.5 1415.0,444.0 1417.0,444.0 1419.0,444.0 1421.0,442.5 1423.0,442.5 1425.0,442.5 1427.0,442.5 1429.0,440.9 1431.0,443.9 1433.0,442.4 1435.0,442.4 1437.0,442.4 1439.0,440.9 1441.0,442.4 1443.0,441.4 1445.0,445.4 1447.0,445.4 1449.0,441.4 1451.0,442.4 1453.0,441.4 1455.0,441.4 1457.0,445.3 1459.0,442.3 1461.0,442.3 1463.0,442.3 1465.0,445.3 1467.0,442.3 1469.0,445.3 1471.0,443.8 1473.0,443.8 1475.0,443.8 1477.0,442.3 1479.0,441.3 1481.0,442.3 1483.0,441.2 1485.0,443.7 1487.0,440.7 1489.0,442.2 1491.0,443.7 1493.0,441.2 1495.0,442.2 1497.0,445.2 1499.0,441.2 1501.0,442.2 1503.0,440.7 1505.0,442.2 1507.0,443.7 1509.0,445.2 1511.0,445.1 1513.0,443.6 1515.0,442.1 1517.0,442.1 1519.0,443.6 1521.0,442.1 1523.0,442.1 1525.0,443.6 1527.0,445.1 1529.0,441.1 1531.0,443.6 1533.0,442.1 1535.0,442.1 1537.0,441.0 1539.0,441.0 1541.0,441.0 1543.0,442.0 1545.0,441.0 1547.0,445.0 1549.0,443.5 1551.0,445.0 1553.0,440.5 1555.0,443.5 1557.0,445.0 1559.0,441.0 1561.0,442.0 1563.0,443.5 1565.0,440.5 1567.0,442.0 1569.0,442.0 1571.0,441.0 1573.0,441.0 1575.0,442.0 1577.0,441.0 1579.0,443.5 1581.0,443.5 1583.0,442.0 1585.0,441.0 1587.0,443.5 1589.0,440.5 1591.0,442.0 1593.0,442.0 1595.0,442.0 1597.0,442.0 1599.0,445.0 1601.0,443.5 1603.0,442.0 1605.0,442.0 1607.0,440.5 1609.0,442.0 1611.0,440.5 1613.0,442.0 1615.0,443.5 1617.0,442.0 1619.0,443.5 1621.0,442.0 1623.0,440.5 1625.0,443.5 1627.0,440.5 1629.0,442.0 1631.0,441.0 1633.0,442.0 1635.0,443.5 1637.0,442.0 1639.0,441.0 1641.0,442.0 1643.0,442.0 1645.0,442.0 1647.0,442.0 1649.0,443.5 1651.0,442.0 1653.0,442.0 1655.0,445.0 1657.0,440.5 1659.0,441.0 1661.0,445.0 1663.0,443.5 1665.0,441.0 1667.0,441.0 1669.0,441.0 1671.0,442.0 1673.0,445.0 1675.0,445.0 1677.0,440.5 1679.0,442.0 1681.0,442.0 1683.0,443.5 1685.0,441.0 1687.0,442.0 1689.0,443.5 1691.0,442.0 1693.0,445.0 1695.0,440.5 1697.0,442.0 1699.0,440.5 1701.0,441.0 1703.0,442.0 1705.0,442.0 1707.0,443.5 1709.0,443.5 1711.0,442.0 1713.0,442.0 1715.0,442.0 1717.0,443.5 1719.0,442.0 1721.0,441.0 1723.0,442.0 1725.0,443.5 1727.0,443.5 1729.0,440.5 1731.0,443.5 1733.0,443.5 1735.0,442.0 1737.0,445.0 1739.0,443.5 1741.0,442.0 1743.0,443.5 1745.0,442.0 1747.0,442.0 1749.0,442.0 1751.0,445.0 1753.0,442.0 1755.0,445.0 1757.0,442.0 1759.0,441.0 1761.0,442.0 1763.0,442.0 1765.0,442.0 1767.0,441.0 1769.0,442.0 1771.0,442.0 1773.0,445.0 1775.0,440.5 1777.0,442.0 1779.0,445.0 1781.0,442.0 1783.0,443.5 1785.0,443.5 1787.0,442.0 1789.0,443.5 1791.0,440.5 1793.0,440.5 1795.0,445.0 1797.0,443.5 1799.0,445.0 1801.0,443.5 1803.0,441.0 1805.8,445.5 1808.0,465.0 1811.0,482.0 1816.4,452.3 1820.0,470.0 1823.2,494.0 1826.0,485.0 1830.0,482.0 1834.0,480.0 1838.3,477.3 1840.5,483.0 1845.0,481.0 1850.0,484.0 1854.5,486.0" fill="none" stroke="#00ff00" stroke-width="1.0" shape-rendering="crispEdges"/><polyline points="1089.5,470.0 1090.0,455.0 1091.0,442.0 1093.4,438.4 1096.0,447.6 1099.0,437.0 1101.0,444.0 1103.0,431.0 1106.0,440.0 1110.0,447.0 1114.0,440.0 1118.0,433.0 1122.0,441.0 1126.0,442.0 1130.0,436.0 1134.0,433.0 1137.0,447.0 1140.0,437.0 1143.0,428.0 1147.0,440.0 1150.0,444.0 1153.0,433.0 1156.0,429.0 1158.0,440.0 1160.0,427.6 1162.0,443.0 1164.0,429.8 1168.0,443.9 1174.0,432.8 1176.0,445.0 1179.0,424.2 1182.0,443.0 1185.0,419.3 1191.0,439.8 1195.0,421.3 1197.0,442.9 1203.0,432.5 1207.0,444.1 1210.0,418.3 1214.0,445.5 1217.0,420.1 1223.0,444.0 1227.0,424.9 1230.0,436.3 1234.0,421.9 1239.0,441.6 1244.0,423.3 1250.0,442.5 1252.0,430.8 1255.0,434.7 1258.0,429.3 1264.0,443.4 1267.0,427.0 1272.0,442.1 1277.0,432.6 1279.0,435.3 1283.0,424.5 1286.0,440.7 1288.0,419.1 1290.0,433.3 1296.0,424.4 1298.0,440.6 1301.0,429.3 1307.0,436.5 1312.0,434.8 1315.0,435.2 1317.0,428.6 1320.0,443.6 1325.0,432.8 1328.0,443.1 1330.0,425.9 1333.0,441.1 1337.0,428.4 1341.0,442.5 1344.0,426.8 1348.0,440.0 1352.0,433.0 1354.0,443.0 1360.0,418.3 1364.0,440.1 1370.0,422.8 1372.0,436.5 1374.0,431.5 1378.0,431.5 1380.0,431.5 1386.0,444.3 1388.0,421.6 1390.0,440.5 1392.0,420.0 1394.0,436.5 1400.0,432.8 1405.0,432.3 1411.0,428.8 1415.0,438.8 1417.0,420.2 1419.0,441.5 1422.0,425.3 1426.0,443.4 1431.0,436.7 1435.0,443.9 1440.0,426.0 1443.0,436.7 1449.0,431.5 1455.0,436.0 1459.0,422.3 1462.0,439.6 1467.0,426.9 1470.0,438.1 1473.0,431.1 1475.0,431.9 1479.0,431.0 1482.0,439.3 1484.0,425.7 1486.0,441.7 1491.0,432.5 1497.0,437.3 1499.0,420.5 1503.0,441.8 1505.0,419.0 1508.0,440.7 1511.0,419.8 1514.0,440.7 1517.0,428.1 1520.0,430.5 1523.0,435.4 1529.0,440.6 1534.0,435.9 1537.0,442.2 1542.0,432.9 1547.0,433.1 1549.0,427.4 1555.0,434.1 1561.0,423.7 1564.0,439.0 1567.0,436.0 1569.0,439.9 1571.0,425.0 1574.0,434.8 1576.0,426.4 1579.0,440.1 1581.0,436.9 1584.0,443.5 1586.0,426.6 1589.0,435.5 1591.0,421.6 1593.0,432.3 1595.0,420.0 1597.0,438.1 1601.0,423.2 1604.0,442.9 1607.0,422.1 1609.0,436.7 1615.0,427.2 1620.0,442.9 1622.0,418.8 1627.0,435.7 1633.0,428.5 1636.0,441.9 1639.0,421.2 1644.0,430.7 1646.0,422.2 1650.0,436.4 1653.0,428.6 1655.0,430.9 1659.0,427.2 1664.0,440.6 1666.0,428.1 1671.0,441.9 1673.0,427.4 1676.0,442.5 1682.0,426.5 1685.0,435.3 1687.0,428.3 1689.0,436.4 1691.0,419.3 1696.0,441.0 1700.0,419.3 1703.0,436.1 1705.0,427.9 1710.0,439.6 1716.0,420.9 1718.0,443.9 1722.0,434.1 1724.0,439.6 1730.0,431.2 1732.0,436.0 1738.0,420.4 1740.0,439.9 1744.0,429.9 1747.0,432.8 1750.0,424.6 1755.0,438.8 1757.0,425.6 1759.0,439.0 1762.0,426.9 1767.0,433.4 1772.0,428.4 1775.0,430.7 1781.0,422.8 1786.0,444.0 1792.0,436.2 1795.0,433.3 1800.0,417.9 1804.0,425.0 1805.0,427.0 1808.0,455.0 1812.6,482.6 1816.0,470.0 1818.0,465.0 1821.0,478.0 1823.9,486.4 1830.0,484.0 1835.0,481.0 1838.0,479.0 1841.0,486.0 1846.0,483.0 1850.0,486.0 1854.5,490.0" fill="none" stroke="#00ffff" stroke-width="1.0" shape-rendering="crispEdges"/><path d="M1088.5 234V549" stroke="#fff" stroke-width="1" stroke-dasharray="3 3" shape-rendering="crispEdges"/><path d="M1806.5 234V549" stroke="#fff" stroke-width="1" stroke-dasharray="18 6" shape-rendering="crispEdges"/><polyline points="83.0,613.5 1606.5,613.5 1606.5,666.5 1607.5,666.5 1608.5,800.0 1609.7,850.0 1610.5,867.7 1611.7,883.8 1612.9,891.4 1614.5,891.4 1615.3,877.8 1616.5,872.1 1617.3,877.8 1617.7,886.6 1618.5,891.4 1620.5,881.0 1621.3,887.4 1622.1,897.9 1623.3,903.5 1624.5,903.5 1625.7,909.5 1626.5,916.8 1627.7,920.8 1629.0,927.9 1630.6,927.2 1632.6,911.1 1633.8,893.4 1634.6,884.2 1635.8,893.4 1636.2,909.5 1637.8,919.2 1639.4,927.9 1643.4,926.0 1646.7,922.4 1648.3,927.9 1652.3,927.9 1654.7,923.2 1655.9,907.9 1656.7,903.1 1658.7,910.3 1659.9,903.9 1664.4,903.1 1666.8,897.5 1668.8,900.3 1670.8,897.5 1672.8,896.3 1675.2,886.2 1676.4,875.3 1677.2,882.2 1678.4,891.8 1680.4,897.5 1681.7,884.6 1682.9,874.9 1684.5,865.3 1686.5,865.3 1686.9,880.2 1688.1,907.5 1688.5,922.4 1690.5,922.4 1692.5,910.3 1694.9,918.4 1698.6,927.9 1701.4,925.6 1704.6,925.6 1706.6,906.3 1708.2,920.8 1709.0,925.6 1715.0,925.6 1715.8,927.9 1721.5,927.9 1722.3,926.0 1725.1,926.0 1726.3,927.9 1727.9,926.0 1730.7,926.0 1731.9,927.9 1733.5,926.0 1736.7,926.0 1738.3,927.9 1740.4,925.6 1741.6,927.9 1744.4,919.2 1747.6,927.9 1752.0,927.9 1754.1,923.6 1754.9,909.1 1755.7,883.0 1756.5,869.3 1756.9,881.8 1757.7,882.2 1758.1,905.5 1758.9,916.8 1760.5,919.2 1762.9,919.2 1767.8,927.9 1770.2,927.9 1771.4,920.0 1773.0,907.1 1774.6,899.9 1775.4,891.8 1776.6,888.2 1777.4,896.7 1777.8,912.0 1779.0,919.2 1780.2,920.0 1782.2,927.9 1784.6,925.2 1785.9,927.9 1788.3,927.9 1790.3,922.4 1792.7,925.6 1795.1,925.6 1795.9,927.9 1802.4,927.9 1804.4,922.4 1806.4,927.9 1808.4,926.0 1810.4,913.2 1812.8,925.6 1816.4,919.2 1818.4,927.9 1822.1,927.9 1824.5,919.2 1827.7,927.9 1828.9,924.8 1830.5,913.2 1832.5,925.6 1834.1,913.2 1836.5,927.9 1839.4,927.9 1841.0,925.6 1842.6,927.9 1845.4,922.4 1849.0,927.9 1851.4,927.9 1854.6,922.4" fill="none" stroke="#ffff00" stroke-width="1.0" shape-rendering="crispEdges"/></svg>
<div class="r" style="left:640px;top:213px;width:11px;height:11px;border:1px solid #444;background:#fff"></div>
<svg class="r" style="left:641px;top:214px" width="11" height="11" viewBox="0 0 11 11"><path d="M1.5 5.5 L4 8.2 L9.5 2.2" fill="none" stroke="#444" stroke-width="1.3"/></svg>
<div class="t" style="left:655.28px;top:214.84px;font-size:12px;color:#ffff00;transform:scaleX(0.8868);transform-origin:0 0;">CPU Clock (MHz)</div>
<div class="r" style="left:749px;top:213px;width:11px;height:11px;border:1px solid #444;background:#fff"></div>
<svg class="r" style="left:750px;top:214px" width="11" height="11" viewBox="0 0 11 11"><path d="M1.5 5.5 L4 8.2 L9.5 2.2" fill="none" stroke="#444" stroke-width="1.3"/></svg>
<div class="t" style="left:764.88px;top:214.84px;font-size:12px;color:#8cb8ff;transform:scaleX(0.9601);transform-origin:0 0;">Motherboard (°C)</div>
<div class="r" style="left:865px;top:213px;width:11px;height:11px;border:1px solid #444;background:#fff"></div>
<svg class="r" style="left:866px;top:214px" width="11" height="11" viewBox="0 0 11 11"><path d="M1.5 5.5 L4 8.2 L9.5 2.2" fill="none" stroke="#444" stroke-width="1.3"/></svg>
<div class="t" style="left:879.68px;top:214.84px;font-size:12px;color:#00ff00;transform:scaleX(0.8112);transform-origin:0 0;">CPU (°C)</div>
<div class="r" style="left:931px;top:213px;width:11px;height:11px;border:1px solid #444;background:#fff"></div>
<svg class="r" style="left:932px;top:214px" width="11" height="11" viewBox="0 0 11 11"><path d="M1.5 5.5 L4 8.2 L9.5 2.2" fill="none" stroke="#444" stroke-width="1.3"/></svg>
<div class="t" style="left:946.68px;top:214.84px;font-size:12px;color:#00ffff;transform:scaleX(0.8751);transform-origin:0 0;">CPU Core #1 (°C)</div>
<div class="r" style="left:1041px;top:213px;width:11px;height:11px;border:1px solid #444;background:#fff"></div>
<svg class="r" style="left:1042px;top:214px" width="11" height="11" viewBox="0 0 11 11"><path d="M1.5 5.5 L4 8.2 L9.5 2.2" fill="none" stroke="#444" stroke-width="1.3"/></svg>
<div class="t" style="left:1056.98px;top:214.84px;font-size:12px;color:#c8e0c8;transform:scaleX(0.8338);transform-origin:0 0;">CPU (RPM)</div>
<div class="r" style="left:1120px;top:213px;width:11px;height:11px;border:1px solid #444;background:#fff"></div>
<svg class="r" style="left:1121px;top:214px" width="11" height="11" viewBox="0 0 11 11"><path d="M1.5 5.5 L4 8.2 L9.5 2.2" fill="none" stroke="#444" stroke-width="1.3"/></svg>
<div class="t" style="left:1135.68px;top:214.84px;font-size:12px;color:#ff3c3c;transform:scaleX(0.8679);transform-origin:0 0;">CPU Core (V)</div>
<div class="r" style="left:1210px;top:213px;width:11px;height:11px;border:1px solid #444;background:#fff"></div>
<svg class="r" style="left:1211px;top:214px" width="11" height="11" viewBox="0 0 11 11"><path d="M1.5 5.5 L4 8.2 L9.5 2.2" fill="none" stroke="#444" stroke-width="1.3"/></svg>
<div class="t" style="left:1225.68px;top:214.84px;font-size:12px;color:#f8c880;transform:scaleX(0.8809);transform-origin:0 0;">CPU Package (W)</div>
<div class="t" style="left:84.28px;top:229.84px;font-size:12px;color:#fff;transform:scaleX(0.9498);transform-origin:0 0;">200</div>
<div class="t" style="left:96.28px;top:544.84px;font-size:12px;color:#fff;">0</div>
<div class="t" style="left:1045.68px;top:554.84px;font-size:12px;color:#fff;transform:scaleX(0.9115);transform-origin:0 0;">17:43:42</div>
<div class="t" style="left:1805.98px;top:554.84px;font-size:12px;color:#fff;transform:scaleX(0.8940);transform-origin:0 0;">18:13:43</div>
<div class="t" style="left:1857.28px;top:477.84px;font-size:12px;color:#ffff00;transform:scaleX(0.9093);transform-origin:0 0;">4297</div>
<div class="t" style="left:1883.58px;top:484.84px;font-size:12px;color:#00ff00;transform:scaleX(0.9691);transform-origin:0 0;">38</div>
<div class="t" style="left:1883.58px;top:486.84px;font-size:12px;color:#00ffff;transform:scaleX(0.9691);transform-origin:0 0;">38</div>
<div class="t" style="left:1857.28px;top:505.84px;font-size:12px;color:#a0c8ff;transform:scaleX(0.9202);transform-origin:0 0;">25</div>
<div class="t" style="left:1857.78px;top:518.84px;font-size:12px;color:#f8c880;transform:scaleX(0.9119);transform-origin:0 0;">16.80</div>
<div class="t" style="left:1884.18px;top:536.84px;font-size:12px;color:#c8e0c8;transform:scaleX(0.8759);transform-origin:0 0;">519</div>
<div class="t" style="left:1858.08px;top:543.84px;font-size:12px;color:#ff3c3c;transform:scaleX(0.9015);transform-origin:0 0;">1.184</div>
<div class="t" style="left:49.28px;top:608.84px;font-size:12px;color:#fff;transform:scaleX(0.9115);transform-origin:0 0;">100%</div>
<div class="t" style="left:61.48px;top:923.84px;font-size:12px;color:#fff;transform:scaleX(0.9100);transform-origin:0 0;">0%</div>
<div class="t" style="left:894.18px;top:593.84px;font-size:12px;color:#ffff00;transform:scaleX(0.8799);transform-origin:0 0;">CPU Usage</div>
<div class="r" style="left:957px;top:594px;width:1px;height:12px;background:#c0c0c0;"></div>
<div class="t" style="left:964.78px;top:593.84px;font-size:12px;color:#00ff00;transform:scaleX(0.9664);transform-origin:0 0;">CPU Throttling</div>
<div class="t" style="left:1857.58px;top:917.84px;font-size:12px;color:#f0e000;transform:scaleX(0.8854);transform-origin:0 0;">2%</div>
<div class="t" style="left:1874.48px;top:923.84px;font-size:12px;color:#00d000;transform:scaleX(0.9100);transform-origin:0 0;">0%</div>
<div class="t" style="left:30.48px;top:978.84px;font-size:12px;color:#000;transform:scaleX(0.9825);transform-origin:0 0;">Remaining Battery:</div>
<div class="r" style="left:143px;top:973px;width:80px;height:24px;background:#000;"></div>
<div class="t" style="left:155.68px;top:978.84px;font-size:12px;color:#00ff00;transform:scaleX(0.9875);transform-origin:0 0;">No battery</div>
<div class="t" style="left:245.98px;top:978.84px;font-size:12px;color:#000;transform:scaleX(0.9277);transform-origin:0 0;">Test Started:</div>
<div class="r" style="left:321px;top:973px;width:140px;height:24px;background:#000;"></div>
<div class="t" style="left:340.38px;top:978.84px;font-size:12px;color:#00ff00;transform:scaleX(0.9071);transform-origin:0 0;">27.02.2023 17:43:42</div>
<div class="t" style="left:484.88px;top:978.84px;font-size:12px;color:#000;transform:scaleX(0.9417);transform-origin:0 0;">Elapsed Time:</div>
<div class="r" style="left:569px;top:973px;width:80px;height:24px;background:#000;"></div>
<div class="t" style="left:587.48px;top:978.84px;font-size:12px;color:#00ff00;transform:scaleX(0.9006);transform-origin:0 0;">00:30:01</div>
<div class="r" style="left:16px;top:1019px;width:71px;height:19px;background:#e1e1e1;border:1px solid #adadad;"></div>
<div class="t" style="left:39.28px;top:1023.84px;font-size:12px;color:#000;transform:scaleX(0.9768);transform-origin:0 0;">Start</div>
<div class="r" style="left:97px;top:1019px;width:71px;height:19px;background:#cccccc;border:1px solid #bfbfbf;"></div>
<div class="t" style="left:120.48px;top:1023.84px;font-size:12px;color:#838383;transform:scaleX(0.9912);transform-origin:0 0;">Stop</div>
<div class="r" style="left:201px;top:1019px;width:71px;height:19px;background:#e1e1e1;border:1px solid #adadad;"></div>
<div class="t" style="left:223.68px;top:1023.84px;font-size:12px;color:#000;transform:scaleX(0.9599);transform-origin:0 0;">Clear</div>
<div class="r" style="left:282px;top:1019px;width:71px;height:19px;background:#dcecfc;border:1px solid #0078d7;"></div>
<div class="t" style="left:306.08px;top:1023.84px;font-size:12px;color:#000;transform:scaleX(0.9057);transform-origin:0 0;">Save</div>
<div class="r" style="left:386px;top:1019px;width:71px;height:19px;background:#e1e1e1;border:1px solid #adadad;"></div>
<div class="t" style="left:405.28px;top:1023.84px;font-size:12px;color:#000;transform:scaleX(0.9128);transform-origin:0 0;">CPUID</div>
<div class="r" style="left:467px;top:1019px;width:71px;height:19px;background:#e1e1e1;border:1px solid #adadad;"></div>
<div class="t" style="left:472.18px;top:1023.84px;font-size:12px;color:#000;transform:scaleX(0.9603);transform-origin:0 0;">Preferences</div>
<div class="r" style="left:1847px;top:1019px;width:71px;height:19px;background:#e1e1e1;border:1px solid #adadad;"></div>
<div class="t" style="left:1869.28px;top:1023.84px;font-size:12px;color:#000;transform:scaleX(0.9727);transform-origin:0 0;">Close</div>
<div class="r" style="left:8px;top:1048px;width:1920px;height:8px;background:linear-gradient(90deg,#cfe4ec 0%,#d0e5ed 40%,#cfe3ee 60%,#d2dcea 85%,#d3d9e8 100%);"></div>
<div class="r" style="left:56px;top:1048px;width:287px;height:8px;background:#fff;box-shadow:inset 1px 1px 0 0 #c8c8c8, inset -1px 0 0 0 #c8c8c8;"></div>
<svg class="r" style="left:282px;top:1049px" width="32" height="7" viewBox="0 0 32 7"><ellipse cx="8.5" cy="5" rx="8" ry="5" fill="#c8bce0"/><circle cx="3" cy="2" r="2.5" fill="#b8a8d8"/><circle cx="14" cy="2" r="2.5" fill="#b8a8d8"/><circle cx="6" cy="4.5" r="1" fill="#503030"/><circle cx="11" cy="4.5" r="1" fill="#503030"/><ellipse cx="25" cy="7" rx="6" ry="2" fill="#d8cce8"/></svg>
<div class="r" style="left:689px;top:1048px;width:44px;height:8px;background:#e9f3f7;"></div>
<div class="r" style="left:733px;top:1048px;width:1px;height:8px;background:#8898a8;"></div>
<div class="r" style="left:734px;top:1048px;width:3px;height:8px;background:#e0eef4;"></div>
<div class="r" style="left:1923px;top:1048px;width:1px;height:8px;background:#606870;"></div>
<div class="t" style="left:1827.78px;top:1052.84px;font-size:12px;color:#222;transform:scaleX(0.8808);transform-origin:0 0;">18:13</div>
</body></html>
